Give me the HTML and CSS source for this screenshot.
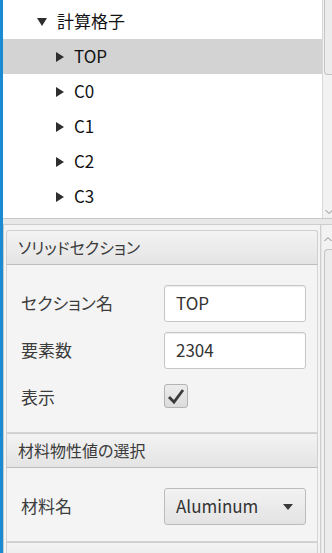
FILE: index.html
```html
<!DOCTYPE html>
<html lang="ja">
<head>
    <meta charset="UTF-8">
    <title>計算格子</title>
    <link rel="stylesheet" href="styles.css">
</head>
<body>
    <div class="app">
        <div class="accent"></div>
        <div class="main">

            <!-- Tree view -->
            <div class="tree">
                <ul class="tree-list">
                    <li class="tree-row root"><span class="arrow down"></span>計算格子</li>
                    <li class="tree-row child selected"><span class="arrow right"></span>TOP</li>
                    <li class="tree-row child"><span class="arrow right"></span>C0</li>
                    <li class="tree-row child"><span class="arrow right"></span>C1</li>
                    <li class="tree-row child"><span class="arrow right"></span>C2</li>
                    <li class="tree-row child"><span class="arrow right"></span>C3</li>
                </ul>
                <div class="vscroll tree-scroll">
                    <div class="thumb thumb-top"></div>
                    <svg class="chev chev-down" width="8" height="6" viewBox="0 0 8 6"><polyline points="0.5,1 4,4.5 7.5,1" fill="none" stroke="#8a8a8a" stroke-width="1"/></svg>
                </div>
            </div>

            <div class="split"></div>

            <!-- Property panes -->
            <div class="props">
                <div class="panes">
                    <section class="titled">
                        <div class="titled-head">ソリッドセクション</div>
                        <div class="titled-body form">
                            <label class="form-label">セクション名</label>
                            <div class="text-field">TOP</div>
                            <label class="form-label">要素数</label>
                            <div class="text-field">2304</div>
                            <label class="form-label">表示</label>
                            <div class="check-cell">
                                <span class="check-box">
                                    <svg width="18" height="17" viewBox="0 0 18 17"><polyline points="2,9 7,14 16,2" fill="none" stroke="#3a3a3a" stroke-width="2.8"/></svg>
                                </span>
                            </div>
                        </div>
                    </section>

                    <section class="titled">
                        <div class="titled-head">材料物性値の選択</div>
                        <div class="titled-body form">
                            <label class="form-label">材料名</label>
                            <div class="combo">
                                <span>Aluminum</span>
                                <span class="combo-arrow"></span>
                            </div>
                        </div>
                    </section>

                    <section class="titled">
                        <div class="titled-head"></div>
                    </section>
                </div>
                <div class="vscroll props-scroll">
                    <svg class="chev chev-up" width="8" height="6" viewBox="0 0 8 6"><polyline points="0.5,5 4,1.5 7.5,5" fill="none" stroke="#8a8a8a" stroke-width="1"/></svg>
                    <div class="thumb thumb-bottom"></div>
                </div>
            </div>

        </div>
    </div>
</body>
</html>
```

FILE: styles.css
```css
body {
    margin: 0;
    padding: 0;
    font-family: "Noto Sans CJK JP", "Noto Sans", sans-serif;
    font-size: 16px;
    line-height: 1.2;
    font-feature-settings: "palt";
    background-color: #f4f4f4;
    overflow: hidden;
}

.app {
    display: flex;
    width: 332px;
    height: 553px;
    overflow: hidden;
}

.accent {
    width: 3px;
    flex: none;
    background-color: #1a8ad4;
}

.main {
    flex: 1;
    display: flex;
    flex-direction: column;
    min-width: 0;
}

/* Tree */
.tree {
    height: 219px;
    flex: none;
    display: flex;
    background-color: #fff;
    border-bottom: 1px solid #c9c9c9;
    box-sizing: border-box;
}

.tree-list {
    flex: 1;
    list-style: none;
    margin: 0;
    padding: 4px 0 0 0;
}

.tree-row {
    height: 35px;
    display: flex;
    align-items: center;
    color: #111;
    font-size: 17px;
}

.tree-row.root {
    padding-left: 31px;
}

.tree-row.child {
    padding-left: 50px;
}

.tree-row.selected {
    background-color: #d3d3d3;
}

.arrow {
    width: 0;
    height: 0;
    flex: none;
}

.arrow.down {
    border-left: 5px solid transparent;
    border-right: 5px solid transparent;
    border-top: 8px solid #2e2e2e;
    margin-right: 10px;
    margin-left: 3px;
}

.arrow.right {
    border-top: 5px solid transparent;
    border-bottom: 5px solid transparent;
    border-left: 8px solid #2e2e2e;
    margin-left: 3px;
    margin-right: 10px;
}

/* Scroll bars */
.vscroll {
    flex: none;
    position: relative;
    background-color: #f2f2f2;
    border-left: 1px solid #d8d8d8;
    box-sizing: border-box;
}

.tree-scroll {
    width: 10px;
}

.props-scroll {
    width: 12px;
    border-left: 1px solid #cfcfcf;
    box-shadow: inset 1px 0 0 #e6e6e6;
}

.thumb {
    position: absolute;
    right: 0;
    background-color: #ececec;
    border: 1px solid #c4c4c4;
    border-right: none;
}

.thumb-top {
    top: -2px;
    left: 1px;
    height: 75px;
    border-radius: 0 0 0 4px;
}

.thumb-bottom {
    top: 24px;
    left: 3px;
    bottom: -4px;
    border-radius: 4px 0 0 0;
}

.chev {
    position: absolute;
    left: 2px;
}

.chev-down {
    bottom: 3px;
}

.chev-up {
    top: 11px;
    left: 3px;
}

.split {
    height: 5px;
    flex: none;
    background-color: #e8e8e8;
    border-bottom: 1px solid #cdcdcd;
}

/* Property panes */
.props {
    flex: 1;
    display: flex;
    min-height: 0;
    border-left: 1px solid #c9c9c9;
}

.panes {
    flex: 1;
    padding: 5px 2px 0 2px;
    overflow: hidden;
}

.titled-head {
    height: 35px;
    box-sizing: border-box;
    padding-left: 11px;
    display: flex;
    align-items: center;
    color: #3a3a3a;
    font-size: 16px;
    background: linear-gradient(#f3f3f3, #e4e4e4);
    border: 1px solid #cfcfcf;
    border-bottom-color: #bdbdbd;
    border-radius: 3px 3px 0 0;
}

.titled-body {
    background-color: #f4f4f4;
    border: 1px solid #d4d4d4;
    border-top: none;
}

.form {
    display: grid;
    grid-template-columns: 143px 142px;
    grid-auto-rows: 37px;
    row-gap: 10px;
    align-items: center;
    padding: 20px 11px 16px 14px;
}

.form-label {
    color: #3c3c3c;
    font-size: 17px;
}

.text-field {
    height: 37px;
    box-sizing: border-box;
    padding-left: 11px;
    display: flex;
    align-items: center;
    background-color: #fff;
    border: 1px solid #c6c6c6;
    border-radius: 3px;
    color: #333;
    font-size: 17px;
    box-shadow: inset 0 1px 1px #ececec;
}

.check-cell {
    display: flex;
    align-items: center;
}

.check-box {
    width: 24px;
    height: 24px;
    box-sizing: border-box;
    display: flex;
    align-items: center;
    justify-content: center;
    margin-top: -3px;
    background: linear-gradient(#ececec, #dcdcdc);
    border: 1px solid #b3b3b3;
    border-radius: 3px;
}

.combo {
    height: 37px;
    box-sizing: border-box;
    padding: 0 12px 0 11px;
    display: flex;
    align-items: center;
    justify-content: space-between;
    background: linear-gradient(#f2f2f2, #e3e3e3);
    border: 1px solid #bcbcbc;
    border-radius: 3px;
    color: #333;
    font-size: 17px;
}

.combo-arrow {
    width: 0;
    height: 0;
    border-left: 5px solid transparent;
    border-right: 5px solid transparent;
    border-top: 6px solid #3a3a3a;
}

.titled + .titled .titled-head {
    border-radius: 0;
}
```
